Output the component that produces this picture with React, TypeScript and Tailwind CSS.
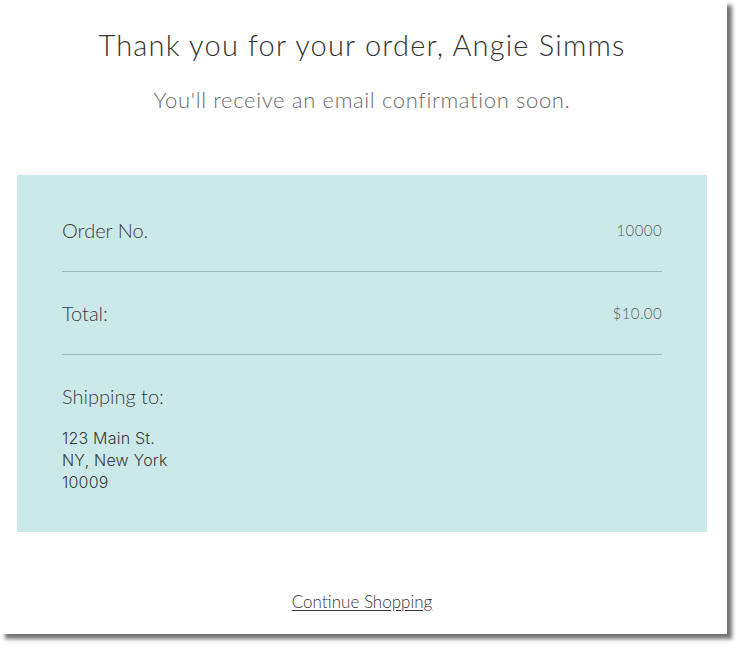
const rows = [
    { label: "Order No.", value: "10000" },
    { label: "Total:", value: "$10.00" },
];

const address = ["123 Main St.", "NY, New York", "10009"];

export default function App() {
    return (
        <div className="min-h-screen bg-white font-['Lato',sans-serif]">
            <div className="flex h-[634px] w-[727px] flex-col bg-white pl-[17px] pr-[20px] pt-[29px] shadow-[5px_5px_4px_rgba(0,0,0,0.55)]">
                <h1 className="text-center text-[29px] font-light leading-[32px] tracking-[1.2px] text-[#333]">
                    Thank you for your order, Angie Simms
                </h1>
                <p className="mt-[26px] text-center text-[22px] font-light leading-[26px] tracking-[0.65px] text-[#6b6b6b]">
                    You'll receive an email confirmation soon.
                </p>

                <section className="mt-[62px] bg-[#cce9e9] px-[45px] pb-[39px] pt-[14px]">
                    {rows.map((r) => (
                        <div
                            key={r.label}
                            className="flex items-center justify-between border-b border-[#9fb9b9] pb-[29px] pt-[29px]"
                        >
                            <span className="text-[20px] font-light leading-[24px] text-[#3a3a3a]">{r.label}</span>
                            <span className="text-[15px] font-light leading-[24px] tracking-[0.4px] text-[#5a5a5a]">
                                {r.value}
                            </span>
                        </div>
                    ))}
                    <p className="pt-[29px] text-[20px] font-light leading-[24px] text-[#3a3a3a]">Shipping to:</p>
                    <div className="mt-[19px] font-['Inter',sans-serif] text-[16px] font-light leading-[22px] tracking-[0.2px] text-[#3a3a3a]">
                        {address.map((line) => (
                            <p key={line}>{line}</p>
                        ))}
                    </div>
                </section>

                <div className="mt-[58px] text-center">
                    <a href="#" className="text-[17px] font-light leading-[22px] text-[#333] underline underline-offset-2">
                        Continue Shopping
                    </a>
                </div>
            </div>
        </div>
    );
}
